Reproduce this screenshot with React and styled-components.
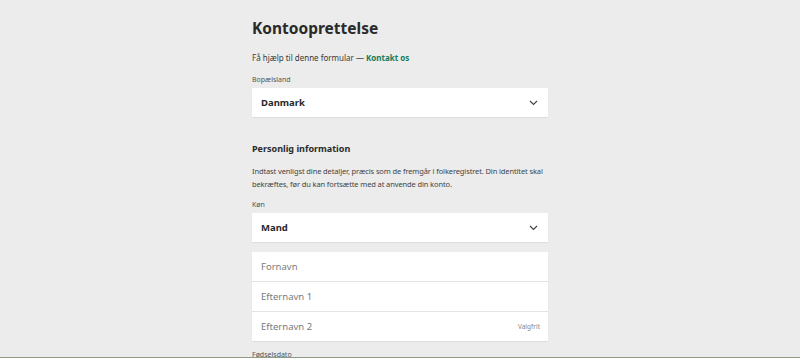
import React from 'react';
import styled, { createGlobalStyle } from 'styled-components';

const GlobalStyle = createGlobalStyle`
  html, body {
    margin: 0;
    padding: 0;
    background: #ebeceb;
    font-family: "Noto Sans", "Open Sans", sans-serif;
    color: #2b2b2b;
  }
  body {
    height: 358px;
    overflow: hidden;
  }
`;

const Page = styled.div`
  height: 358px;
  position: relative;
  overflow: hidden;
`;

const Form = styled.div`
  width: 296px;
  margin: 0 auto;
  padding-top: 17px;
  display: flex;
  flex-direction: column;
`;

const Title = styled.h1`
  margin: 0;
  font-size: 15.5px;
  font-weight: 700;
  line-height: 22px;
  color: #2a2a2a;
`;

const Help = styled.p`
  margin: 13px 0 0;
  font-size: 8px;
  line-height: 12px;
  color: #3a3a3a;
`;

const Link = styled.a`
  color: #177a55;
  font-weight: 700;
  text-decoration: none;
`;

const Label = styled.div`
  margin-top: ${(p) => p.$top || 10}px;
  font-size: 7px;
  line-height: 10px;
  color: #555;
`;

const Select = styled.div`
  margin-top: 3px;
  height: 29px;
  background: #fff;
  display: flex;
  align-items: center;
  justify-content: space-between;
  padding: 0 10px 0 9px;
  box-shadow: 0 1px 1px rgba(0, 0, 0, 0.06);
  font-size: 9.5px;
  font-weight: 700;
  color: #2a2a2a;
`;

const Section = styled.h2`
  margin: 25px 0 0;
  font-size: 9px;
  font-weight: 700;
  line-height: 14px;
  color: #2a2a2a;
`;

const Para = styled.p`
  margin: 9px 0 0;
  font-size: 7.5px;
  line-height: 13px;
  letter-spacing: -0.12px;
  color: #444;
`;

const Group = styled.div`
  margin-top: 10px;
  background: #fff;
  display: flex;
  flex-direction: column;
  box-shadow: 0 1px 1px rgba(0, 0, 0, 0.06);
`;

const Field = styled.div`
  height: 29px;
  display: flex;
  align-items: center;
  justify-content: space-between;
  padding: 0 8px 0 9px;
  font-size: 9.5px;
  color: #7a7a7a;
  & + & {
    border-top: 1px solid #e4e4e4;
  }
`;

const Optional = styled.span`
  font-size: 6.5px;
  color: #888;
`;

const Footer = styled.div`
  position: absolute;
  left: 0;
  right: 0;
  bottom: 0;
  height: 1px;
  background: #8c9a86;
`;

const Chevron = () => (
  <svg width="9" height="6" viewBox="0 0 9 6">
    <path d="M1 1 L4.5 4.5 L8 1" fill="none" stroke="#444" strokeWidth="1.2" />
  </svg>
);

export default function App() {
  return (
    <Page>
      <GlobalStyle />
      <Form>
        <Title>Kontooprettelse</Title>
        <Help>
          Få hjælp til denne formular — <Link>Kontakt os</Link>
        </Help>
        <Label $top={11}>Bopælsland</Label>
        <Select>
          Danmark
          <Chevron />
        </Select>
        <Section>Personlig information</Section>
        <Para>
          Indtast venligst dine detaljer, præcis som de fremgår i folkeregistret. Din identitet skal
          bekræftes, før du kan fortsætte med at anvende din konto.
        </Para>
        <Label $top={9}>Køn</Label>
        <Select>
          Mand
          <Chevron />
        </Select>
        <Group>
          <Field>Fornavn</Field>
          <Field>Efternavn 1</Field>
          <Field>
            Efternavn 2<Optional>Valgfrit</Optional>
          </Field>
        </Group>
        <Label $top={9}>Fødselsdato</Label>
      </Form>
      <Footer />
    </Page>
  );
}
